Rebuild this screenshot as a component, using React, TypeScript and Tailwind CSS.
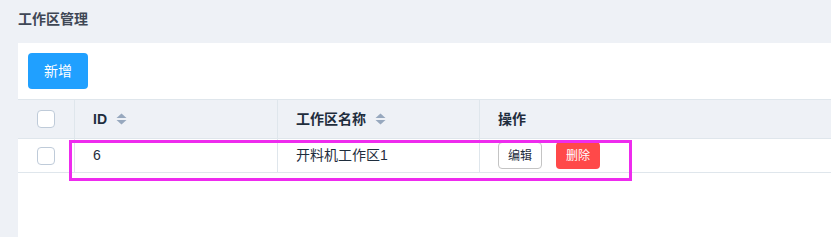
import React from "react";

function SortIcon() {
  return (
    <svg width="11" height="12" viewBox="0 0 11 12" className="ml-[9px] shrink-0">
      <path d="M5.5 0.5 L10.5 5 L0.5 5 Z" fill="#97a8be" />
      <path d="M0.5 7 L10.5 7 L5.5 11.5 Z" fill="#97a8be" />
    </svg>
  );
}

function Checkbox() {
  return <div className="w-[18px] h-[18px] rounded-[4px] border border-[#bfcbd9] bg-white" />;
}

export default function App() {
  return (
    <div
      className="relative w-[831px] h-[237px] overflow-hidden bg-[#eef1f6] flex flex-col"
      style={{ fontFamily: '"Liberation Sans", "Noto Sans CJK SC", sans-serif' }}
    >
      <div className="pl-[18px] pt-[9px] h-[43px] text-[14px] leading-[20px] font-bold text-[#3f4755]">
        工作区管理
      </div>
      <div className="ml-[18px] flex-1 bg-white flex flex-col">
        <div className="p-[10px]">
          <button className="w-[60px] h-[36px] rounded-[4px] bg-[#20a0ff] text-white text-[14px] leading-[14px]">
            新增
          </button>
        </div>
        <div className="text-[14px] text-[#1f2d3d]">
          <div className="flex h-[40px] bg-[#eef1f6] border-t border-b border-[#dfe6ec] font-bold">
            <div className="w-[57px] shrink-0 flex items-center justify-center border-r border-[#dfe6ec]">
              <Checkbox />
            </div>
            <div className="w-[203px] shrink-0 flex items-center pl-[18px] border-r border-[#dfe6ec]">
              ID
              <SortIcon />
            </div>
            <div className="w-[202px] shrink-0 flex items-center pl-[18px] border-r border-[#dfe6ec]">
              工作区名称
              <SortIcon />
            </div>
            <div className="flex-1 flex items-center pl-[18px]">操作</div>
          </div>
          <div className="flex h-[34px] border-b border-[#dfe6ec]">
            <div className="w-[57px] shrink-0 flex items-center justify-center border-r border-[#dfe6ec]">
              <Checkbox />
            </div>
            <div className="w-[203px] shrink-0 flex items-center pl-[18px] border-r border-[#dfe6ec]">6</div>
            <div className="w-[202px] shrink-0 flex items-center pl-[18px] border-r border-[#dfe6ec]">
              开料机工作区1
            </div>
            <div className="flex-1 flex items-center pl-[18px] gap-[14px]">
              <button className="w-[44px] h-[27px] rounded-[4px] border border-[#c4c4c4] bg-white text-[12px] leading-[12px] text-[#1f2d3d]">
                编辑
              </button>
              <button className="w-[44px] h-[27px] rounded-[4px] bg-[#ff4949] text-[12px] leading-[12px] text-white">
                删除
              </button>
            </div>
          </div>
        </div>
      </div>
      <div className="absolute left-[69px] top-[140px] w-[563px] h-[41px] border-[3px] border-[#ee2bee] pointer-events-none" />
    </div>
  );
}
